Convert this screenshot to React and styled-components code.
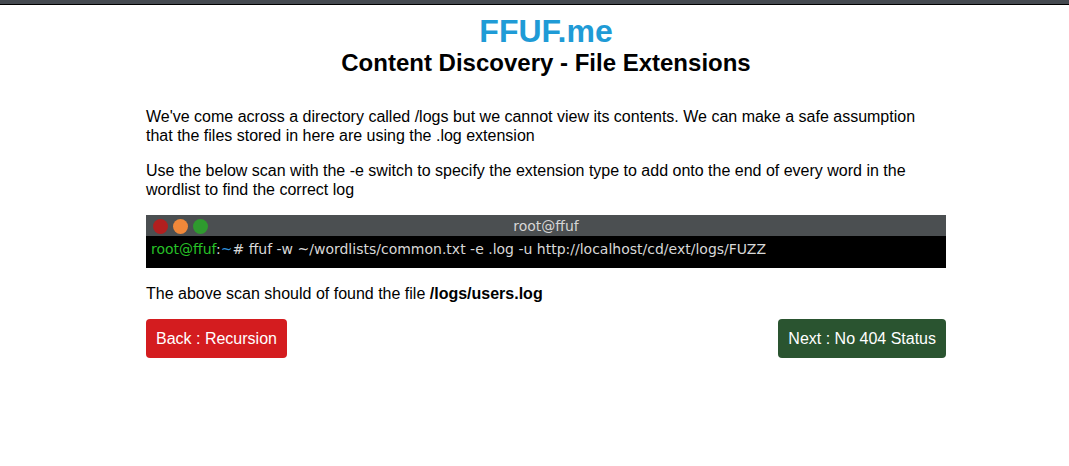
import styled, { createGlobalStyle } from "styled-components";

const GlobalStyle = createGlobalStyle`
  html, body {
    margin: 0;
    padding: 0;
    background: #ffffff;
    font-family: "Liberation Sans", Arial, sans-serif;
    color: #000000;
  }
`;

const TopBar = styled.div`
  height: 4px;
  background: #454a50;
  border-bottom: 1px solid #000000;
`;

const Shell = styled.div`
  padding-left: 23px;
`;

const Page = styled.div`
  width: 800px;
  margin: 0 auto;
`;

const Header = styled.header`
  text-align: center;
  padding-top: 8px;
`;

const Brand = styled.h1`
  margin: 0;
  font-size: 32px;
  line-height: 36px;
  font-weight: 700;
  color: #1f9bd6;
`;

const Subtitle = styled.h2`
  margin: 0;
  font-size: 24px;
  line-height: 28px;
  font-weight: 700;
`;

const Content = styled.main`
  padding-top: 30px;
`;

const Para = styled.p`
  margin: 0 0 16px;
  font-size: 16px;
  line-height: 19px;
`;

const Terminal = styled.div`
  margin: 0 0 16px;
  font-family: "DejaVu Sans", sans-serif;
  font-size: 14px;
`;

const TitleBar = styled.div`
  position: relative;
  height: 21px;
  background: #4b4f51;
  color: #d6d6d6;
  display: flex;
  align-items: center;
  justify-content: center;
`;

const Dots = styled.div`
  position: absolute;
  left: 7px;
  top: 4px;
  display: flex;
  gap: 5px;
`;

const Dot = styled.span`
  width: 15px;
  height: 15px;
  border-radius: 50%;
  background: ${(p) => p.$color};
`;

const Screen = styled.div`
  background: #000000;
  color: #d8d8d8;
  height: 32px;
  padding: 4px 5px 0;
  box-sizing: border-box;
  line-height: 18px;
`;

const User = styled.span`
  color: #27c127;
`;

const Path = styled.span`
  color: #2f8fd8;
`;

const Actions = styled.div`
  display: flex;
  justify-content: space-between;
`;

const Button = styled.a`
  display: inline-flex;
  align-items: center;
  height: 39px;
  padding: 0 10px;
  border-radius: 4px;
  font-size: 16px;
  color: #ffffff;
  text-decoration: none;
  background: ${(p) => (p.$variant === "next" ? "#2a5430" : "#d41c1f")};
`;

export default function App() {
  return (
    <>
      <GlobalStyle />
      <TopBar />
      <Shell>
        <Page>
          <Header>
            <Brand>FFUF.me</Brand>
            <Subtitle>Content Discovery - File Extensions</Subtitle>
          </Header>
          <Content>
            <Para>
              We've come across a directory called /logs but we cannot view its contents. We can make a safe assumption that the files stored in here are using the .log extension
            </Para>
            <Para>
              Use the below scan with the -e switch to specify the extension type to add onto the end of every word in the wordlist to find the correct log
            </Para>
            <Terminal>
              <TitleBar>
                <Dots>
                  <Dot $color="#b21f1f" />
                  <Dot $color="#f0883a" />
                  <Dot $color="#2e9a2e" />
                </Dots>
                root@ffuf
              </TitleBar>
              <Screen>
                <User>root@ffuf</User>:<Path>~</Path># ffuf -w ~/wordlists/common.txt -e .log -u http://localhost/cd/ext/logs/FUZZ
              </Screen>
            </Terminal>
            <Para>
              The above scan should of found the file <b>/logs/users.log</b>
            </Para>
            <Actions>
              <Button href="#" $variant="back">Back : Recursion</Button>
              <Button href="#" $variant="next">Next : No 404 Status</Button>
            </Actions>
          </Content>
        </Page>
      </Shell>
    </>
  );
}
